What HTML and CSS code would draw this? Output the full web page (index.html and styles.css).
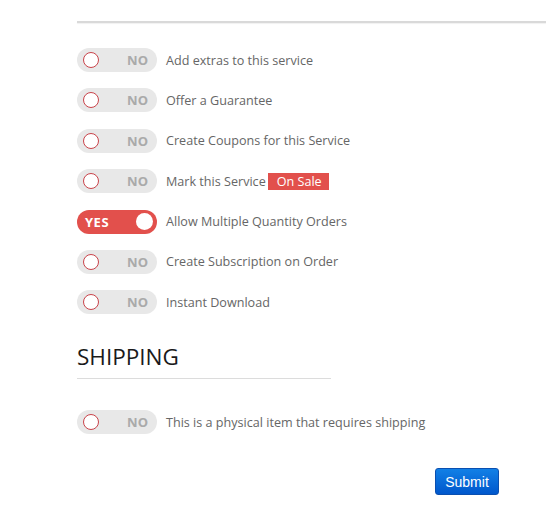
FILE: index.html
```html
<!DOCTYPE html>
<html>
<head>
<meta charset="utf-8">
<link rel="stylesheet" href="styles.css">
</head>
<body>
<div class="page">
  <div class="topline"></div>
  <div class="options">
    <div class="row"><span class="toggle"><span class="knob"></span><span class="state">NO</span></span><span class="label">Add extras to this service</span></div>
    <div class="row"><span class="toggle"><span class="knob"></span><span class="state">NO</span></span><span class="label">Offer a Guarantee</span></div>
    <div class="row"><span class="toggle"><span class="knob"></span><span class="state">NO</span></span><span class="label">Create Coupons for this Service</span></div>
    <div class="row"><span class="toggle"><span class="knob"></span><span class="state">NO</span></span><span class="label">Mark this Service <span class="badge">On Sale</span></span></div>
    <div class="row"><span class="toggle on"><span class="state">YES</span><span class="knob"></span></span><span class="label">Allow Multiple Quantity Orders</span></div>
    <div class="row"><span class="toggle"><span class="knob"></span><span class="state">NO</span></span><span class="label">Create Subscription on Order</span></div>
    <div class="row"><span class="toggle"><span class="knob"></span><span class="state">NO</span></span><span class="label">Instant Download</span></div>
  </div>
  <h2 class="heading">SHIPPING</h2>
  <div class="options shipping">
    <div class="row"><span class="toggle"><span class="knob"></span><span class="state">NO</span></span><span class="label">This is a physical item that requires shipping</span></div>
  </div>
  <div class="actions"><button class="submit">Submit</button></div>
</div>
</body>
</html>
```
FILE: styles.css
```css
html, body { margin: 0; padding: 0; background: #fff; }
body { font-family: "Open Sans", sans-serif; }
.page { padding-left: 77px; padding-top: 21px; }
.topline { height: 2px; background: #d9d9d9; box-shadow: 0 1px 1px rgba(0,0,0,0.06); }
.options { padding-top: 25px; display: flex; flex-direction: column; gap: 16.4px; }
.row { display: flex; align-items: center; height: 24px; }
.toggle { width: 80px; height: 24px; border-radius: 12px; background: #e8e8e8; display: flex; align-items: center; justify-content: space-between; padding: 0 9px 0 6px; box-sizing: border-box; flex-shrink: 0; }
.knob { width: 16px; height: 16px; border-radius: 50%; background: #fff; border: 1.5px solid #c9434a; box-sizing: border-box; }
.state { font-size: 13px; font-weight: 700; color: #aaa; }
.toggle.on { background: #e2504c; padding: 0 4px 0 8px; }
.toggle.on .state { color: #fff; letter-spacing: 0.5px; }
.toggle.on .knob { width: 17px; height: 17px; border: none; }
.label { margin-left: 9px; font-size: 12.6px; color: #666; display: flex; align-items: center; }
.badge { background: #e2504c; color: #fff; padding: 0 7px 0 9px; margin-left: 2px; height: 17px; line-height: 17px; font-size: 12.6px; }
.heading { margin: 28px 0 0; font-size: 22.5px; font-weight: 400; color: #1a1a1a; line-height: 30px; width: 254px; border-bottom: 1px solid #dcdcdc; padding-bottom: 6px; }
.shipping { padding-top: 31px; }
.actions { display: flex; padding-left: 358px; padding-top: 34px; }
.submit { width: 64px; height: 27px; border: 1px solid #0a4fb0; border-radius: 3px; background: linear-gradient(#1280e6, #0057cc); color: #fff; font-family: "Liberation Sans", Arial, sans-serif; font-size: 14px; padding: 0; }
```
